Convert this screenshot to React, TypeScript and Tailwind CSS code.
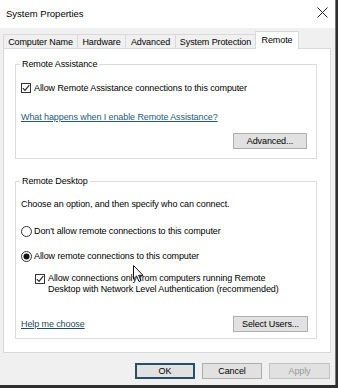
import React from "react";

const font = { fontFamily: '"Liberation Sans", Arial, sans-serif' };

function CheckBox() {
  return (
    <span className="w-[10px] h-[10px] border border-[#333] bg-white flex items-center justify-center shrink-0">
      <svg width="8" height="8" viewBox="0 0 8 8">
        <path d="M0.8 4.2 L3 6.4 L7.3 1.2" fill="none" stroke="#222" strokeWidth="1.1" />
      </svg>
    </span>
  );
}

function Radio({ on }: { on?: boolean }) {
  return (
    <svg width="11" height="11" viewBox="0 0 11 11" className="shrink-0">
      <circle cx="5.5" cy="5.5" r="5" fill="white" stroke="#333" strokeWidth="1" />
      {on && <circle cx="5.5" cy="5.5" r="3" fill="#111" />}
    </svg>
  );
}

function Btn({ children, w, cls = "" }: { children: React.ReactNode; w: string; cls?: string }) {
  return (
    <div className={`h-[16px] ${w} flex items-center justify-center border bg-[#e1e1e1] ${cls}`}>{children}</div>
  );
}

function Tab({ label, w }: { label: string; w: string }) {
  return (
    <div className={`${w} h-[14px] flex items-center justify-center border-t border-l border-[#d9d9d9] bg-[#f0f0f0] text-black`}>
      {label}
    </div>
  );
}

export default function App() {
  return (
    <div className="w-[338px] h-[388px] bg-[#2e2e2e] relative overflow-hidden text-[9px] leading-[12px] tracking-[-0.1px] text-black" style={font}>
      <div className="w-[336px] h-[385px] bg-[#f0f0f0] border-r border-[#777] flex flex-col">
        {/* title bar */}
        <div className="h-[28px] bg-white flex items-center justify-between pl-[6px] pr-[7px] shrink-0">
          <span className="text-[9.5px] tracking-normal pb-[1px]">System Properties</span>
          <svg width="11" height="11" viewBox="0 0 11 11" className="mb-[3px]">
            <path d="M0.5 0.5 L10.5 10.5 M10.5 0.5 L0.5 10.5" stroke="#222" strokeWidth="1" />
          </svg>
        </div>
        {/* tabs */}
        <div className="flex items-end ml-[3px] mt-[3px] h-[17px] relative z-10">
          <Tab label="Computer Name" w="w-[74px]" />
          <Tab label="Hardware" w="w-[48px]" />
          <Tab label="Advanced" w="w-[50px]" />
          <Tab label="System Protection" w="w-[80px]" />
          <div className="w-[44px] h-[18px] -mb-[1px] flex items-start justify-center pt-[2px] bg-white border-t border-l border-r border-[#d9d9d9]">
            Remote
          </div>
        </div>
        {/* panel */}
        <div className="ml-[3px] w-[328px] bg-white border border-[#d9d9d9] pt-[15px] pb-[13px] pl-[11px] pr-[13px]">
          {/* Remote Assistance */}
          <div className="relative border border-[#dcdcdc] pt-[17px] pb-[9px] pl-[5px] pr-[9px]">
            <span className="absolute -top-[7px] left-[4px] bg-white px-[2px]">Remote Assistance</span>
            <div className="h-[12px] flex items-center gap-[3px]">
              <CheckBox />
              <span>Allow Remote Assistance connections to this computer</span>
            </div>
            <div className="h-[12px] mt-[17px] flex items-center">
              <span className="text-[#1f5a78] underline underline-offset-[1px]">What happens when I enable Remote Assistance?</span>
            </div>
            <div className="mt-[10px] flex justify-end">
              <Btn w="w-[74px]" cls="border-[#adadad]">Advanced...</Btn>
            </div>
          </div>
          {/* Remote Desktop */}
          <div className="relative mt-[22px] border border-[#dcdcdc] pt-[16px] pb-[6px] pl-[5px] pr-[8px]">
            <span className="absolute -top-[7px] left-[4px] bg-white px-[2px]">Remote Desktop</span>
            <div className="h-[12px] flex items-center">Choose an option, and then specify who can connect.</div>
            <div className="h-[12px] mt-[15px] flex items-center gap-[2px]">
              <Radio />
              <span>Don't allow remote connections to this computer</span>
            </div>
            <div className="h-[12px] mt-[13px] flex items-center gap-[2px]">
              <Radio on />
              <span>Allow remote connections to this computer</span>
            </div>
            <div className="mt-[11px] ml-[14px] flex items-start gap-[3px] leading-[11px]">
              <span className="mt-[1px]"><CheckBox /></span>
              <span>
                Allow connections only from computers running Remote
                <br />
                Desktop with Network Level Authentication (recommended)
              </span>
            </div>
            <div className="mt-[21px] flex items-center justify-between">
              <span className="text-[#1f4a60] underline underline-offset-[1px]">Help me choose</span>
              <Btn w="w-[75px]" cls="border-[#adadad]">Select Users...</Btn>
            </div>
          </div>
        </div>
        {/* bottom buttons */}
        <div className="mt-[10px] flex justify-end gap-[7px] pr-[5px]">
          <Btn w="w-[60px]" cls="border-[2px] border-[#26506a]">OK</Btn>
          <Btn w="w-[60px]" cls="border-[#adadad]">Cancel</Btn>
          <Btn w="w-[61px]" cls="border-[#c4c4c4] bg-[#cccccc] text-[#9a9a9a]">Apply</Btn>
        </div>
      </div>
      {/* mouse cursor */}
      <svg className="absolute left-[133px] top-[265px]" width="12" height="18" viewBox="0 0 12 18">
        <path d="M0.5 0.5 L0.5 14 L3.6 11 L6 16.5 L8 15.6 L5.7 10.3 L10 10.3 Z" fill="white" stroke="#111" strokeWidth="1" />
      </svg>
    </div>
  );
}
